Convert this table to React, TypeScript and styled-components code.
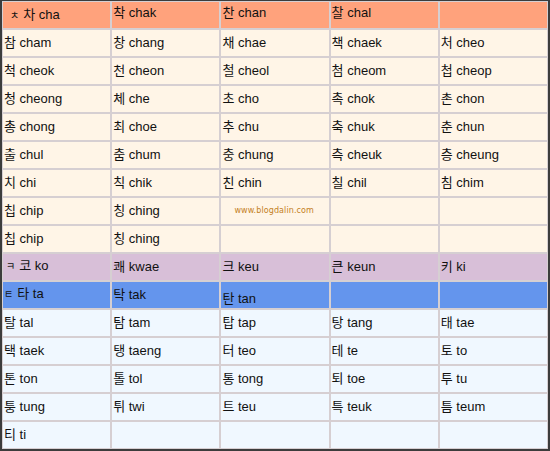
import React from 'react'
import styled, { createGlobalStyle } from 'styled-components'

const GlobalStyle = createGlobalStyle`
  html, body {
    margin: 0;
    padding: 0;
    background: #ffffff;
  }
`

type Tone = 'head' | 'cream' | 'lilac' | 'blue' | 'ice'

const tones: Record<Tone, string> = {
  head: '#ffa27c',
  cream: '#fff5e7',
  lilac: '#d8bfd8',
  blue: '#6495ed',
  ice: '#f0f8ff',
}

const Frame = styled.div`
  width: 550px;
  height: 451px;
  box-sizing: border-box;
  border-style: solid;
  border-color: #3c3c3c;
  border-width: 1px 2px 2px 2px;
  padding: 1px;
  background: #d6cfd2;
`

const Grid = styled.div`
  display: grid;
  grid-template-columns: repeat(5, 1fr);
  grid-auto-rows: 26px;
  gap: 2px;
  height: 100%;
`

const Cell = styled.div<{ $tone: Tone; $shift?: number; $indent?: number }>`
  background: ${p => tones[p.$tone]};
  display: flex;
  align-items: center;
  padding: 0 0 0 ${p => (p.$indent ?? 1)}px;
  font-family: "Liberation Sans", "Noto Sans CJK KR", sans-serif;
  font-size: 13px;
  line-height: 15px;
  color: #111111;
  white-space: nowrap;
  overflow: hidden;

  & > span {
    position: relative;
    top: ${p => p.$shift ?? 0}px;
  }
`

const Jamo = styled.span`
  font-size: 10px;
  margin-right: 4px;
`

const Mark = styled.span`
  font-family: "DejaVu Sans", sans-serif;
  font-size: 8px;
  color: #c47f24;
  margin-left: 12px;
  letter-spacing: 0.1px;
`

type Row = { tone: Tone; cells: string[] }

const rows: Row[] = [
  { tone: 'head', cells: ['ㅊ|차 cha', '착 chak', '찬 chan', '찰 chal', ''] },
  { tone: 'cream', cells: ['참 cham', '창 chang', '채 chae', '책 chaek', '처 cheo'] },
  { tone: 'cream', cells: ['척 cheok', '천 cheon', '철 cheol', '첨 cheom', '첩 cheop'] },
  { tone: 'cream', cells: ['청 cheong', '체 che', '초 cho', '촉 chok', '촌 chon'] },
  { tone: 'cream', cells: ['총 chong', '최 choe', '추 chu', '축 chuk', '춘 chun'] },
  { tone: 'cream', cells: ['출 chul', '춤 chum', '충 chung', '측 cheuk', '층 cheung'] },
  { tone: 'cream', cells: ['치 chi', '칙 chik', '친 chin', '칠 chil', '침 chim'] },
  { tone: 'cream', cells: ['칩 chip', '칭 ching', '@', '', ''] },
  { tone: 'cream', cells: ['칩 chip', '칭 ching', '', '', ''] },
  { tone: 'lilac', cells: ['ㅋ|코 ko', '쾌 kwae', '크 keu', '큰 keun', '키 ki'] },
  { tone: 'blue', cells: ['ㅌ|타 ta', '탁 tak', '탄 tan', '', ''] },
  { tone: 'ice', cells: ['탈 tal', '탐 tam', '탑 tap', '탕 tang', '태 tae'] },
  { tone: 'ice', cells: ['택 taek', '탱 taeng', '터 teo', '테 te', '토 to'] },
  { tone: 'ice', cells: ['톤 ton', '톨 tol', '통 tong', '퇴 toe', '투 tu'] },
  { tone: 'ice', cells: ['퉁 tung', '튀 twi', '트 teu', '특 teuk', '틈 teum'] },
  { tone: 'ice', cells: ['티 ti', '', '', '', ''] },
]

// 원본 캡처에서 글자 위치가 조금씩 어긋난 칸들
const shiftOf = (r: number, c: number): number => {
  if (r === 0 && c === 0) return 0
  if (r === 0) return -3
  if (r === 10 && c === 2) return 3
  return -1
}

const renderText = (text: string) => {
  if (text === '@') return <Mark>www.blogdalin.com</Mark>
  if (text.includes('|')) {
    const [jamo, rest] = text.split('|')
    return (
      <span>
        <Jamo>{jamo}</Jamo>
        {rest}
      </span>
    )
  }
  return <span>{text}</span>
}

export default function App() {
  return (
    <>
      <GlobalStyle />
      <Frame>
        <Grid>
          {rows.map((row, r) =>
            row.cells.map((text, c) => (
              <Cell
                key={`${r}-${c}`}
                $tone={row.tone}
                $shift={shiftOf(r, c)}
                $indent={r === 0 && c === 0 ? 7 : r === 9 && c === 0 ? 3 : 1}
              >
                {renderText(text)}
              </Cell>
            ))
          )}
        </Grid>
      </Frame>
    </>
  )
}
